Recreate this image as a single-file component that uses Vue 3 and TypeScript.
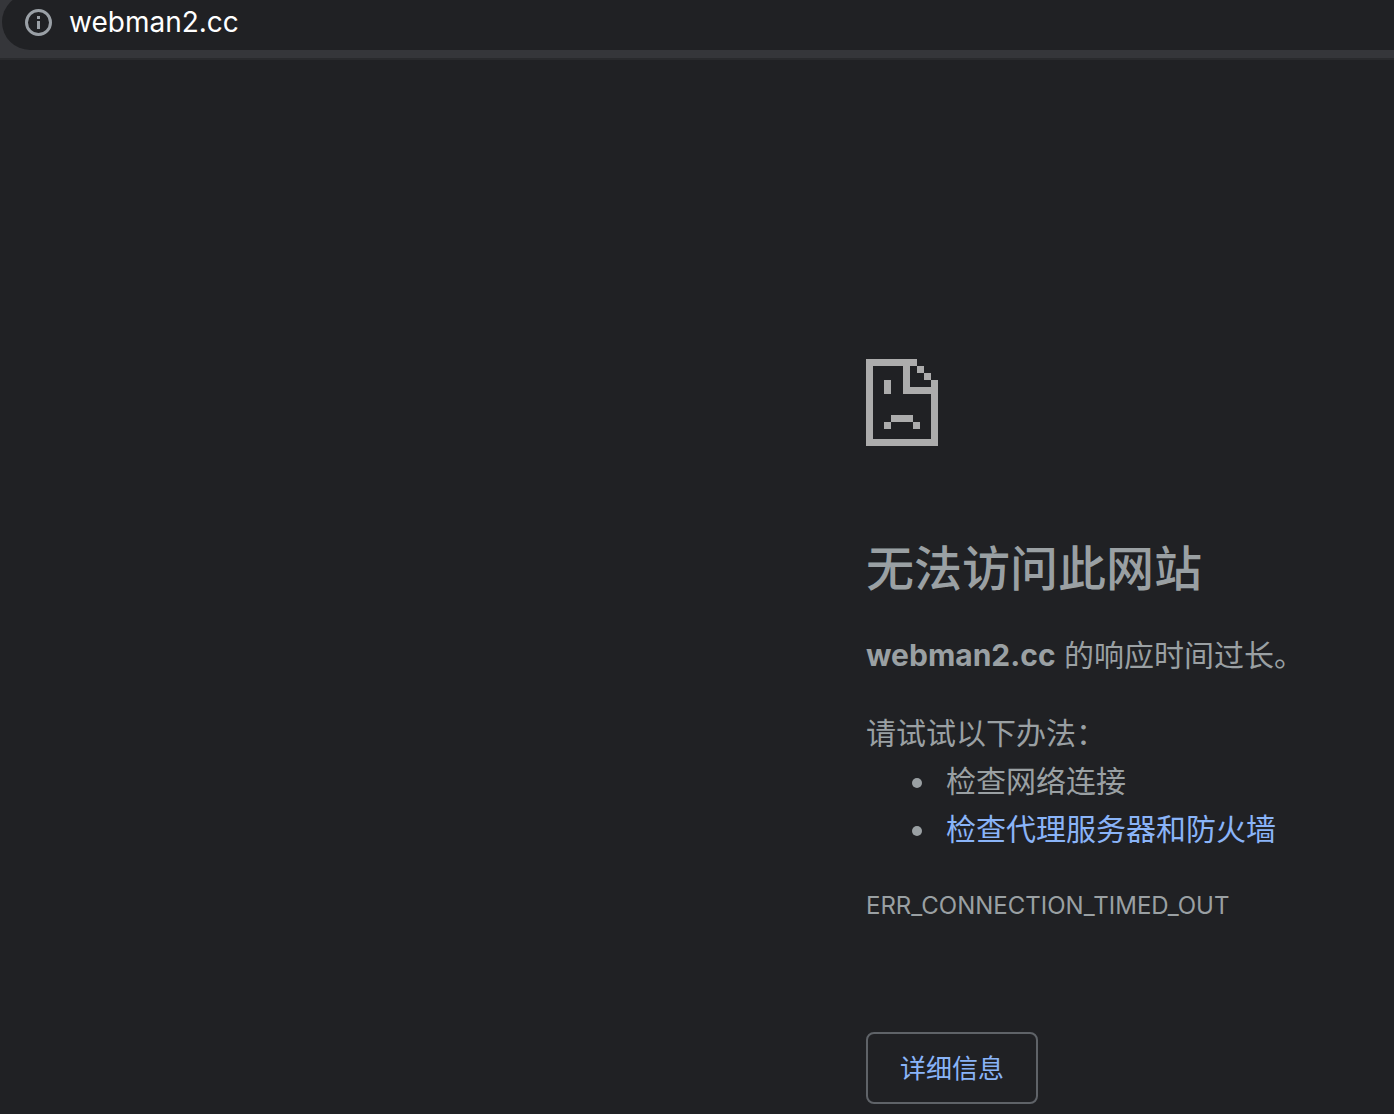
<script setup lang="ts">
import { ref } from 'vue'

const host = ref<string>('webman2.cc')
const errorCode = 'ERR_CONNECTION_TIMED_OUT'
</script>

<template>
  <div class="browser">
    <header class="toolbar">
      <div class="omnibox">
        <button class="site-info" type="button" aria-label="查看网站信息">
          <svg viewBox="0 0 28 28" width="28" height="28" aria-hidden="true">
            <circle cx="14.5" cy="14.5" r="12" fill="none" stroke="#9aa0a6" stroke-width="3" />
            <path d="M13 8h3v3h-3zM13 13h3v8h-3z" fill="#9aa0a6" />
          </svg>
        </button>
        <input v-model="host" class="address" type="text" aria-label="地址和搜索栏" spellcheck="false" />
      </div>
    </header>

    <main class="page">
      <section class="error">
        <svg class="sad-page" viewBox="0 0 72 87" width="72" height="87" shape-rendering="crispEdges" aria-hidden="true">
          <path
            fill="#acacac"
            d="M0 0h51v7h-7v21h21v-7h7v66H0zM7 7v73h58V35H37V7zM51 7h7v7h-7zM58 14h7v7h-7zM18 21h7v14h-7zM25 56h22v7H25zM18 63h7v7h-7zM47 63h7v7h-7z"
            fill-rule="evenodd"
          />
        </svg>
        <h1>无法访问此网站</h1>
        <p class="summary"><strong>webman2.cc</strong> 的响应时间过长。</p>
        <p class="hint">请试试以下办法：</p>
        <ul>
          <li>检查网络连接</li>
          <li><a href="#proxy">检查代理服务器和防火墙</a></li>
        </ul>
        <p class="code">{{ errorCode }}</p>
        <button class="details" type="button">详细信息</button>
      </section>
    </main>
  </div>
</template>

<style>
body {
  margin: 0;
  background: #202124;
}
</style>

<style scoped>
.browser {
  min-height: 100vh;
  background: #202124;
  color: #9aa0a3;
  font-family: Inter, "Noto Sans CJK SC", sans-serif;
  overflow: hidden;
}

.toolbar {
  background: #35363a;
  border-bottom: 2px solid #292a2d;
  padding: 0 0 8px 2px;
}

.omnibox {
  display: flex;
  align-items: center;
  gap: 17px;
  height: 56px;
  margin-top: -6px;
  padding-left: 22px;
  background: #202124;
  border-radius: 28px 0 0 28px;
}

.site-info {
  display: flex;
  padding: 0;
  border: 0;
  background: none;
}

.address {
  flex: 1;
  min-width: 0;
  padding: 0;
  border: 0;
  outline: 0;
  background: none;
  color: #fff;
  font: 400 28px/40px Inter, sans-serif;
}

.page {
  display: grid;
  grid-template-columns: 866fr 528fr;
}

.error {
  grid-column: 2;
  padding: 299px 0 10px;
  font-size: 30px;
  line-height: 48px;
}

.sad-page {
  display: block;
}

h1 {
  margin: 94px 0 33px;
  font-size: 48px;
  line-height: 58px;
  font-weight: 500;
}

p {
  margin: 0;
}

.hint {
  margin-top: 30px;
}

ul {
  margin: 0;
  padding-left: 72px;
}

li {
  padding-left: 8px;
}

a {
  color: #8ab4f8;
  text-decoration: none;
}

.code {
  margin-top: 29px;
  font-size: 24px;
}

.details {
  display: block;
  box-sizing: border-box;
  height: 72px;
  margin-top: 102px;
  padding: 2px 32px 0;
  border: 2px solid #5f6368;
  border-radius: 8px;
  background: none;
  color: #8ab4f8;
  font: 400 26px/40px Inter, "Noto Sans CJK SC", sans-serif;
}
</style>
